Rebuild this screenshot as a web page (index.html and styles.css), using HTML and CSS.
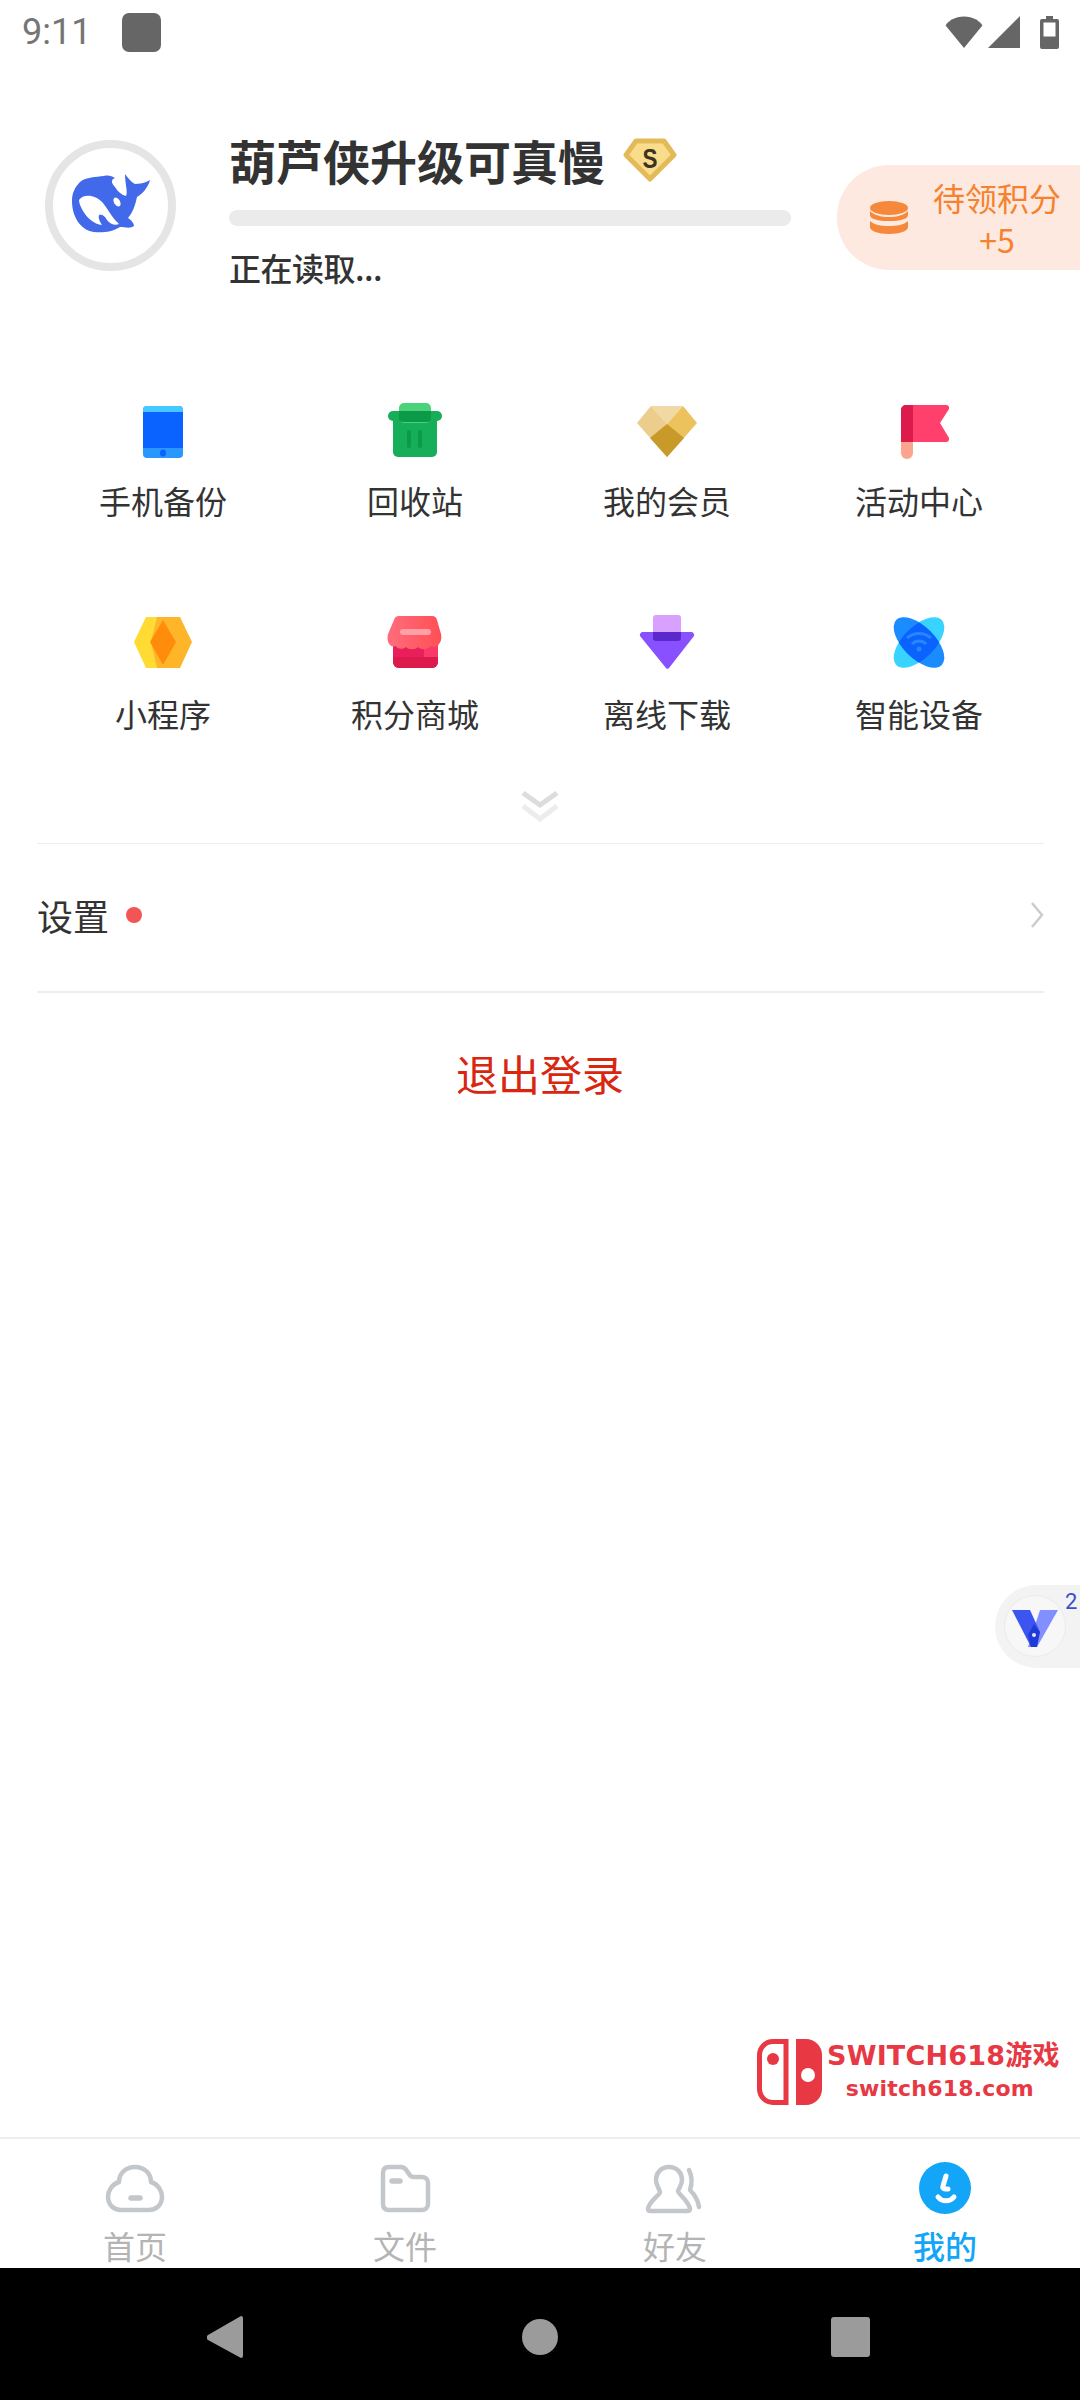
FILE: index.html
```html
<!DOCTYPE html>
<html lang="zh-CN">
<head>
    <meta charset="UTF-8">
    <meta name="viewport" content="width=device-width, initial-scale=1.0">
    <title>我的</title>
    <link rel="stylesheet" href="styles.css">
</head>
<body>
    <div class="phone">
        <div class="status-bar">
            <span class="clock">9:11</span>
            <span class="notif-icon"></span>
            <div class="status-icons">
                <svg class="ic-wifi" viewBox="0 0 38 32"><path d="M19 32 0.6 9.500C3 5 10 0.500 19 0.500S35 5 37.400 9.500Z"/></svg>
                <svg class="ic-signal" viewBox="0 0 32 32"><path d="M32 0V32H0Z"/></svg>
                <svg class="ic-battery" viewBox="0 0 19 33"><path d="M6 0h7v3h4a2 2 0 0 1 2 2v26a2 2 0 0 1-2 2H2a2 2 0 0 1-2-2V5a2 2 0 0 1 2-2h4Z"/><rect class="batt-empty" x="3.500" y="6.500" width="12" height="14"/></svg>
            </div>
        </div>

        <main class="content">
            <section class="profile">
                <div class="avatar">
                    <svg class="whale" viewBox="0 0 78 59">
                        <path fill="#4169ea" d="M8 8C14 3 24 3 32 2C36 1 40 2 43 4C38 6 40 10 43 13C46 18 50 21 54 22C56 18 53 10 53 0C56 4 59 8 63 10C67 10 73 9 78 6C76 14 70 20 65 23C63 32 61 38 56 44C59 46 62 49 62 52C58 55 53 53 48 53C40 58 30 59 22 58C8 56 0 42 0 27C0 19 3 13 8 8Z"/>
                        <path fill="#fff" d="M7 26C11 20 23 20 31 29C36 35 40 44 47 50C43 52 38 50 35 46C33 42 30 40 27 41C26 44 28 48 30 51C22 50 15 44 11 37C9 33 7 30 7 26Z"/>
                        <ellipse fill="#fff" cx="45" cy="28" rx="3" ry="5" transform="rotate(-30 45 28)"/>
                    </svg>
                </div>
                <div class="info">
                    <div class="name-row">
                        <h1 class="name">葫芦侠升级可真慢</h1>
                        <svg class="badge" viewBox="0 0 54 44">
                            <path class="badge-shape" d="M13 3H41L51 17 27 41 3 17Z"/>
                            <text class="badge-s" x="27" y="30" text-anchor="middle" textLength="15" lengthAdjust="spacingAndGlyphs">S</text>
                        </svg>
                    </div>
                    <div class="progress"></div>
                    <p class="read-state">正在读取...</p>
                </div>
                <div class="points">
                    <svg class="coins" viewBox="0 0 38 33">
                        <ellipse fill="#f5883a" cx="19" cy="7" rx="19" ry="7"/>
                        <path fill="#f5883a" d="M0 10V14C0 18 8 20 19 20S38 18 38 14V10C34 14 27 16 19 16S4 14 0 10Z"/>
                        <path fill="#f5883a" d="M0 20V26C0 30 8 33 19 33S38 30 38 26V20C34 24 27 25 19 25S4 24 0 20Z"/>
                    </svg>
                    <div class="points-text">待领积分<br>+5</div>
                </div>
            </section>

            <section class="tools">
                <div class="tool">
                    <svg class="tool-icon" viewBox="0 0 60 62">
                        <rect fill="#2a96ff" x="10" y="5" width="40" height="52" rx="4"/>
                        <path fill="#45c8ff" d="M10 11V9a4 4 0 0 1 4-4h32a4 4 0 0 1 4 4v2Z"/>
                        <rect fill="#0a62ff" x="10" y="11" width="40" height="36"/>
                        <ellipse fill="#0a62ff" cx="30" cy="52" rx="3" ry="3.500"/>
                    </svg>
                    <span class="tool-label">手机备份</span>
                </div>
                <div class="tool">
                    <svg class="tool-icon" viewBox="0 0 60 62">
                        <path fill="#16ae58" d="M8 19H52V51a5 5 0 0 1-5 5H13a5 5 0 0 1-5-5Z"/>
                        <rect fill="#4bd37b" x="14" y="2" width="32" height="20" rx="5"/>
                        <rect fill="#16ae58" x="3" y="10" width="54" height="10" rx="5"/>
                        <path fill="#0b9a48" d="M14 10H46V17a4 4 0 0 1-4 4H18a4 4 0 0 1-4-4Z"/>
                        <rect fill="#0b9a48" x="22" y="29" width="4" height="18" rx="2"/>
                        <rect fill="#0b9a48" x="33" y="29" width="4" height="18" rx="2"/>
                    </svg>
                    <span class="tool-label">回收站</span>
                </div>
                <div class="tool">
                    <svg class="tool-icon" viewBox="0 0 60 62">
                        <path fill="#f0d9a4" d="M14 5H46L30 23Z"/>
                        <path fill="#eccd8b" d="M14 5 0 22 30 56 30 23Z"/>
                        <path fill="#ecc25c" d="M46 5 60 22 30 56 30 23Z"/>
                        <path fill="#c79a2a" d="M30 23 47 37 30 56 13 37Z"/>
                    </svg>
                    <span class="tool-label">我的会员</span>
                </div>
                <div class="tool">
                    <svg class="tool-icon" viewBox="0 0 60 62">
                        <rect fill="#fba58e" x="12" y="36" width="12" height="22" rx="6"/>
                        <path fill="#ff3f6c" d="M17 4H57a3 3 0 0 1 3 4L51 22 60 37a3 3 0 0 1-3 4H12V9a5 5 0 0 1 5-5Z"/>
                        <path fill="#dd1a4c" d="M17 4H24V41H12V9a5 5 0 0 1 5-5Z"/>
                    </svg>
                    <span class="tool-label">活动中心</span>
                </div>
                <div class="tool">
                    <svg class="tool-icon" viewBox="0 3 60 62">
                        <path fill="#ffdb33" d="M13 6H36L42 31 36 57H13L1 31Z"/>
                        <path fill="#ffb52a" d="M24 6H47L59 31 47 57H24L18 31Z"/>
                        <path fill="#ff8c0a" d="M30 9 43 31 30 54 17 31Z"/>
                    </svg>
                    <span class="tool-label">小程序</span>
                </div>
                <div class="tool">
                    <svg class="tool-icon" viewBox="0 2 60 62">
                        <defs>
                            <linearGradient id="awning" x1="0" y1="0" x2="1" y2="0">
                                <stop offset="0" stop-color="#ff6c7c"/>
                                <stop offset="1" stop-color="#ff4f55"/>
                            </linearGradient>
                        </defs>
                        <path fill="#e81f5a" d="M8 28H53V50a6 6 0 0 1-6 6H14a6 6 0 0 1-6-6Z"/>
                        <path fill="#dc1a4b" d="M8 45H53V50a6 6 0 0 1-6 6H14a6 6 0 0 1-6-6Z"/>
                        <path fill="#f73a67" d="M39 30H53V45H39Z"/>
                        <path fill="url(#awning)" d="M14 4H47C50 4 51 5 52 8L56 22C58 30 52 37 46 34C42 38 36 38 33 35C30 38 24 38 21 35C18 38 12 37 11 34C5 36 1 30 3 22L9 8C10 5 11 4 14 4Z"/>
                        <rect fill="#ffa0a8" x="15" y="17" width="31" height="6" rx="3"/>
                    </svg>
                    <span class="tool-label">积分商城</span>
                </div>
                <div class="tool">
                    <svg class="tool-icon" viewBox="0 0 60 62">
                        <rect fill="#d8a0ff" x="16" y="1" width="28" height="26" rx="3"/>
                        <path fill="#8850ff" d="M6 18H54a3 3 0 0 1 3 4L32 54a2 2 0 0 1-3 0L3 22a3 3 0 0 1 3-4Z"/>
                        <path fill="#5b28cc" d="M16 18H44V24a3 3 0 0 1-3 3H19a3 3 0 0 1-3-3Z"/>
                    </svg>
                    <span class="tool-label">离线下载</span>
                </div>
                <div class="tool">
                    <svg class="tool-icon" viewBox="0 0 60 62">
                        <defs>
                            <clipPath id="lens">
                                <ellipse cx="30" cy="28.500" rx="16" ry="32" transform="rotate(-45 30 28.500)"/>
                            </clipPath>
                        </defs>
                        <ellipse fill="#38d4ff" cx="30" cy="28.500" rx="16" ry="32" transform="rotate(45 30 28.500)"/>
                        <ellipse fill="#1a8cff" cx="30" cy="28.500" rx="16" ry="32" transform="rotate(-45 30 28.500)"/>
                        <g clip-path="url(#lens)">
                            <ellipse fill="#0a62ff" cx="30" cy="28.500" rx="16" ry="32" transform="rotate(45 30 28.500)"/>
                        </g>
                        <path fill="none" stroke="#2a86ff" stroke-width="3" d="M18 24C25 18 35 18 42 24M23 30C27 26 33 26 37 30"/>
                        <circle fill="#2a86ff" cx="30" cy="35" r="2.500"/>
                    </svg>
                    <span class="tool-label">智能设备</span>
                </div>
            </section>

            <div class="more">
                <svg class="more-icon" viewBox="0 0 40 31">
                    <path class="more-top" d="M3 2 20 14 37 2"/>
                    <path class="more-bottom" d="M3 15 20 28 37 15"/>
                </svg>
            </div>

            <div class="settings-row">
                <span class="settings-label">设置</span>
                <span class="dot"></span>
                <svg class="arrow" viewBox="0 0 14 26"><path d="M2 1 12 13 2 25"/></svg>
            </div>

            <div class="logout">退出登录</div>

            <div class="float-ball">
                <div class="float-inner">
                    <svg class="float-logo" viewBox="0 0 46 37">
                        <path fill="#8290ff" d="M46 0H28L16 37H25Z"/>
                        <path fill="#3d55f0" d="M0 0H18L28 22 22 37H19Z"/>
                        <path fill="#1f3bd6" d="M22 14 28 22 25 37H19L16 25Z"/>
                        <circle fill="#dfe4ff" cx="22" cy="25" r="2"/>
                    </svg>
                </div>
                <span class="float-count">2</span>
            </div>

            <div class="watermark">
                <svg class="switch-logo" viewBox="0 0 65 66">
                    <path fill="none" stroke="#e73843" stroke-width="5" d="M29 2.500H16A13.500 13.500 0 0 0 2.500 16V50A13.500 13.500 0 0 0 16 63.500H29Z"/>
                    <circle fill="#e73843" cx="16" cy="20" r="6"/>
                    <path fill="#e73843" d="M39 0H49A16 16 0 0 1 65 16V50A16 16 0 0 1 49 66H39Z"/>
                    <circle fill="#fff" cx="51" cy="36" r="7"/>
                </svg>
                <div class="wm-text">
                    <div class="wm-title">SWITCH618游戏</div>
                    <div class="wm-url">switch618.com</div>
                </div>
            </div>
        </main>

        <nav class="tabbar">
            <div class="tab">
                <svg class="tab-icon" viewBox="0 0 60 50">
                    <path d="M14 17C14 8 21 2 30 2S46 8 46 17C53 19 57 26 57 32C57 40 51 45 44 45H16C9 45 3 40 3 32C3 26 7 19 14 17Z"/>
                    <path class="tab-mark" d="M26 33H35"/>
                </svg>
                <span class="tab-label">首页</span>
            </div>
            <div class="tab">
                <svg class="tab-icon" viewBox="0 0 60 50">
                    <path d="M8 8C8 4 10 2 14 2H26C29 2 30 3 32 6L34 9C35 11 36 12 39 12H47C50 12 53 14 53 18V39C53 43 50 45 47 45H14C10 45 8 43 8 39Z"/>
                    <path class="tab-mark" d="M17 16H25"/>
                </svg>
                <span class="tab-label">文件</span>
            </div>
            <div class="tab">
                <svg class="tab-icon" viewBox="0 0 60 50">
                    <path d="M24 2C32 2 37 8 37 15C37 20 34 23 33 26C33 29 44 36 45 44C45 46 44 46 42 46H6C4 46 3 46 3 44C4 36 15 30 15 27C14 23 11 20 11 15C11 8 16 2 24 2Z"/>
                    <path d="M44 5C47 11 47 19 45 25C49 29 53 35 54 42"/>
                </svg>
                <span class="tab-label">好友</span>
            </div>
            <div class="tab active">
                <svg class="tab-icon" viewBox="0 0 60 50">
                    <circle class="me-bg" cx="30" cy="23" r="26"/>
                    <path class="me-mark" d="M31 11 28 21C27 24 30 24 33 24"/>
                    <path class="me-mark" d="M23 32C27 37 35 37 39 32"/>
                </svg>
                <span class="tab-label">我的</span>
            </div>
        </nav>

        <div class="nav-bar">
            <svg class="nav-back" viewBox="0 0 36 42"><path d="M34 0a2 2 0 0 1 2 2V40a2 2 0 0 1-2 2L1 24a3 3 0 0 1 0-5Z"/></svg>
            <span class="nav-home"></span>
            <span class="nav-recent"></span>
        </div>
    </div>
</body>
</html>
```

FILE: styles.css
```css
* {
    box-sizing: border-box;
}
html, body {
    margin: 0;
    padding: 0;
}
body {
    font-family: "Noto Sans CJK SC", "Noto Sans", sans-serif;
    background: #fff;
    color: #333;
}
.phone {
    width: 1080px;
    height: 2400px;
    display: flex;
    flex-direction: column;
    overflow: hidden;
}

/* status bar */
.status-bar {
    height: 64px;
    flex: none;
    display: flex;
    align-items: center;
    padding: 0 21px 0 22px;
    color: #757575;
}
.clock {
    font-family: Roboto, sans-serif;
    font-size: 36px;
    width: 100px;
}
.notif-icon {
    width: 39px;
    height: 39px;
    border-radius: 7px;
    background: #666;
}
.status-icons {
    margin-left: auto;
    display: flex;
    align-items: center;
    gap: 5px;
}
.status-icons svg {
    fill: #666;
    display: block;
}
.ic-wifi {
    width: 38px;
    height: 32px;
}
.ic-signal {
    width: 32px;
    height: 32px;
    margin-right: 15px;
}
.ic-battery {
    width: 19px;
    height: 33px;
}
.status-icons .batt-empty {
    fill: #fff;
}

.content {
    flex: 1;
    position: relative;
}

/* profile */
.profile {
    display: flex;
    align-items: flex-start;
    padding: 73px 0 0 45px;
}
.avatar {
    width: 131px;
    height: 131px;
    flex: none;
    margin-top: 3px;
    border: 8px solid #e5e5e5;
    border-radius: 50%;
    display: flex;
    align-items: center;
    justify-content: center;
}
.whale {
    width: 78px;
    height: 59px;
    margin-top: -4px;
}
.info {
    width: 661px;
    flex: none;
    padding-left: 53px;
}
.name-row {
    display: flex;
    align-items: center;
    height: 45px;
}
.name {
    margin: 0;
    font-size: 47px;
    font-weight: 700;
    line-height: 45px;
    white-space: nowrap;
}
.badge {
    width: 54px;
    height: 44px;
    margin-left: 18px;
}
.badge-shape {
    fill: #f9dd8c;
    stroke: #e2bb58;
    stroke-width: 5px;
    stroke-linejoin: round;
}
.badge-s {
    font-family: "Liberation Sans", sans-serif;
    font-size: 28px;
    font-weight: 700;
    fill: #3d3320;
}
.progress {
    width: 562px;
    height: 16px;
    margin-top: 28px;
    border-radius: 8px;
    background: #ebebeb;
}
.read-state {
    margin: 21px 0 0;
    font-size: 32px;
    font-weight: 500;
    line-height: 40px;
    letter-spacing: -0.5px;
    white-space: nowrap;
}
.points {
    width: 243px;
    height: 105px;
    flex: none;
    margin-top: 28px;
    border-radius: 52px 0 0 52px;
    background: #fde9e0;
    display: flex;
    align-items: center;
    padding-left: 33px;
}
.coins {
    width: 38px;
    height: 33px;
    flex: none;
}
.points-text {
    width: 128px;
    margin-left: 25px;
    color: #f5822e;
    font-size: 32px;
    line-height: 42px;
    text-align: center;
    white-space: nowrap;
}

/* tools */
.tools {
    display: grid;
    grid-template-columns: repeat(4, 252px);
    row-gap: 92px;
    padding-left: 37px;
    margin-top: 114px;
}
.tool {
    display: flex;
    flex-direction: column;
    align-items: center;
}
.tool-icon {
    width: 60px;
    height: 62px;
}
.tool-label {
    margin-top: 15px;
    font-size: 32px;
    line-height: 44px;
}
.more {
    display: flex;
    justify-content: center;
    margin-top: 56px;
}
.more-icon {
    width: 40px;
    height: 31px;
    fill: none;
    stroke-width: 5px;
}
.more-top {
    stroke: #dcdcdc;
}
.more-bottom {
    stroke: #ececec;
}

/* settings */
.settings-row {
    margin: 21px 36px 0 37px;
    height: 150px;
    padding-bottom: 5px;
    border-top: 1px solid #eee;
    border-bottom: 2px solid #eee;
    display: flex;
    align-items: center;
}
.settings-label {
    font-size: 36px;
}
.dot {
    width: 16px;
    height: 16px;
    margin-left: 17px;
    border-radius: 50%;
    background: #f25555;
}
.arrow {
    width: 14px;
    height: 26px;
    margin-left: auto;
    fill: none;
    stroke: #ccc;
    stroke-width: 2.5px;
}
.logout {
    margin-top: 50px;
    color: #d9260f;
    font-size: 42px;
    line-height: 60px;
    text-align: center;
}

/* things floating over the page */
.float-ball {
    position: absolute;
    left: 995px;
    top: 1521px;
    width: 85px;
    height: 83px;
    border-radius: 42px 0 0 42px;
    background: #f3f3f3;
}
.float-inner {
    position: absolute;
    left: 9px;
    top: 10px;
    width: 62px;
    height: 62px;
    border-radius: 50%;
    background: #f7f7f7;
    border: 1px solid #ebebeb;
    display: flex;
    align-items: center;
    justify-content: center;
}
.float-logo {
    width: 46px;
    height: 37px;
    margin-top: 5px;
}
.float-count {
    position: absolute;
    left: 70px;
    top: 5px;
    color: #3a50c8;
    font-family: Roboto, sans-serif;
    font-size: 22px;
    line-height: 24px;
}
.watermark {
    position: absolute;
    left: 757px;
    top: 1975px;
    display: flex;
    color: #e73843;
}
.switch-logo {
    width: 65px;
    height: 66px;
    flex: none;
}
.wm-text {
    margin-left: 5px;
    display: flex;
    flex-direction: column;
    align-items: center;
}
.wm-title {
    font-family: "DejaVu Sans", "Noto Sans CJK SC", sans-serif;
    font-size: 27px;
    font-weight: 700;
    line-height: 34px;
    letter-spacing: 0.2px;
    white-space: nowrap;
}
.wm-url {
    font-family: "DejaVu Sans", sans-serif;
    font-size: 22px;
    font-weight: 700;
    line-height: 26px;
    margin: 3px 7px 0 0;
    letter-spacing: 0.2px;
}

/* bottom tabs */
.tabbar {
    height: 131px;
    flex: none;
    border-top: 2px solid #eee;
    display: grid;
    grid-template-columns: repeat(4, 270px);
}
.tab {
    display: flex;
    flex-direction: column;
    align-items: center;
    padding-top: 26px;
    color: #b4b4b4;
}
.tab-icon {
    width: 60px;
    height: 50px;
    fill: none;
    stroke: #c3c7cc;
    stroke-width: 4.5px;
    stroke-linejoin: round;
    stroke-linecap: round;
    overflow: visible;
}
.tab-mark {
    stroke-width: 5.5px;
}
.tab-label {
    margin-top: 11px;
    font-size: 32px;
    line-height: 38px;
}
.tab.active {
    color: #12a5f8;
}
.tab.active .tab-label {
    font-weight: 500;
}
.tab-icon .me-bg {
    fill: #12a5f8;
    stroke: none;
}
.tab-icon .me-mark {
    stroke: #fff;
    stroke-width: 5px;
}

/* android nav */
.nav-bar {
    height: 132px;
    flex: none;
    background: #000;
    display: grid;
    grid-template-columns: 207px 36px 279px 36px 273px 39px;
    align-items: center;
    padding-top: 6px;
}
.nav-back {
    grid-column: 2;
    width: 36px;
    height: 42px;
    fill: #9b9b9b;
}
.nav-home {
    grid-column: 4;
    width: 36px;
    height: 36px;
    border-radius: 50%;
    background: #9b9b9b;
}
.nav-recent {
    grid-column: 6;
    width: 39px;
    height: 40px;
    border-radius: 3px;
    background: #9b9b9b;
}
```
